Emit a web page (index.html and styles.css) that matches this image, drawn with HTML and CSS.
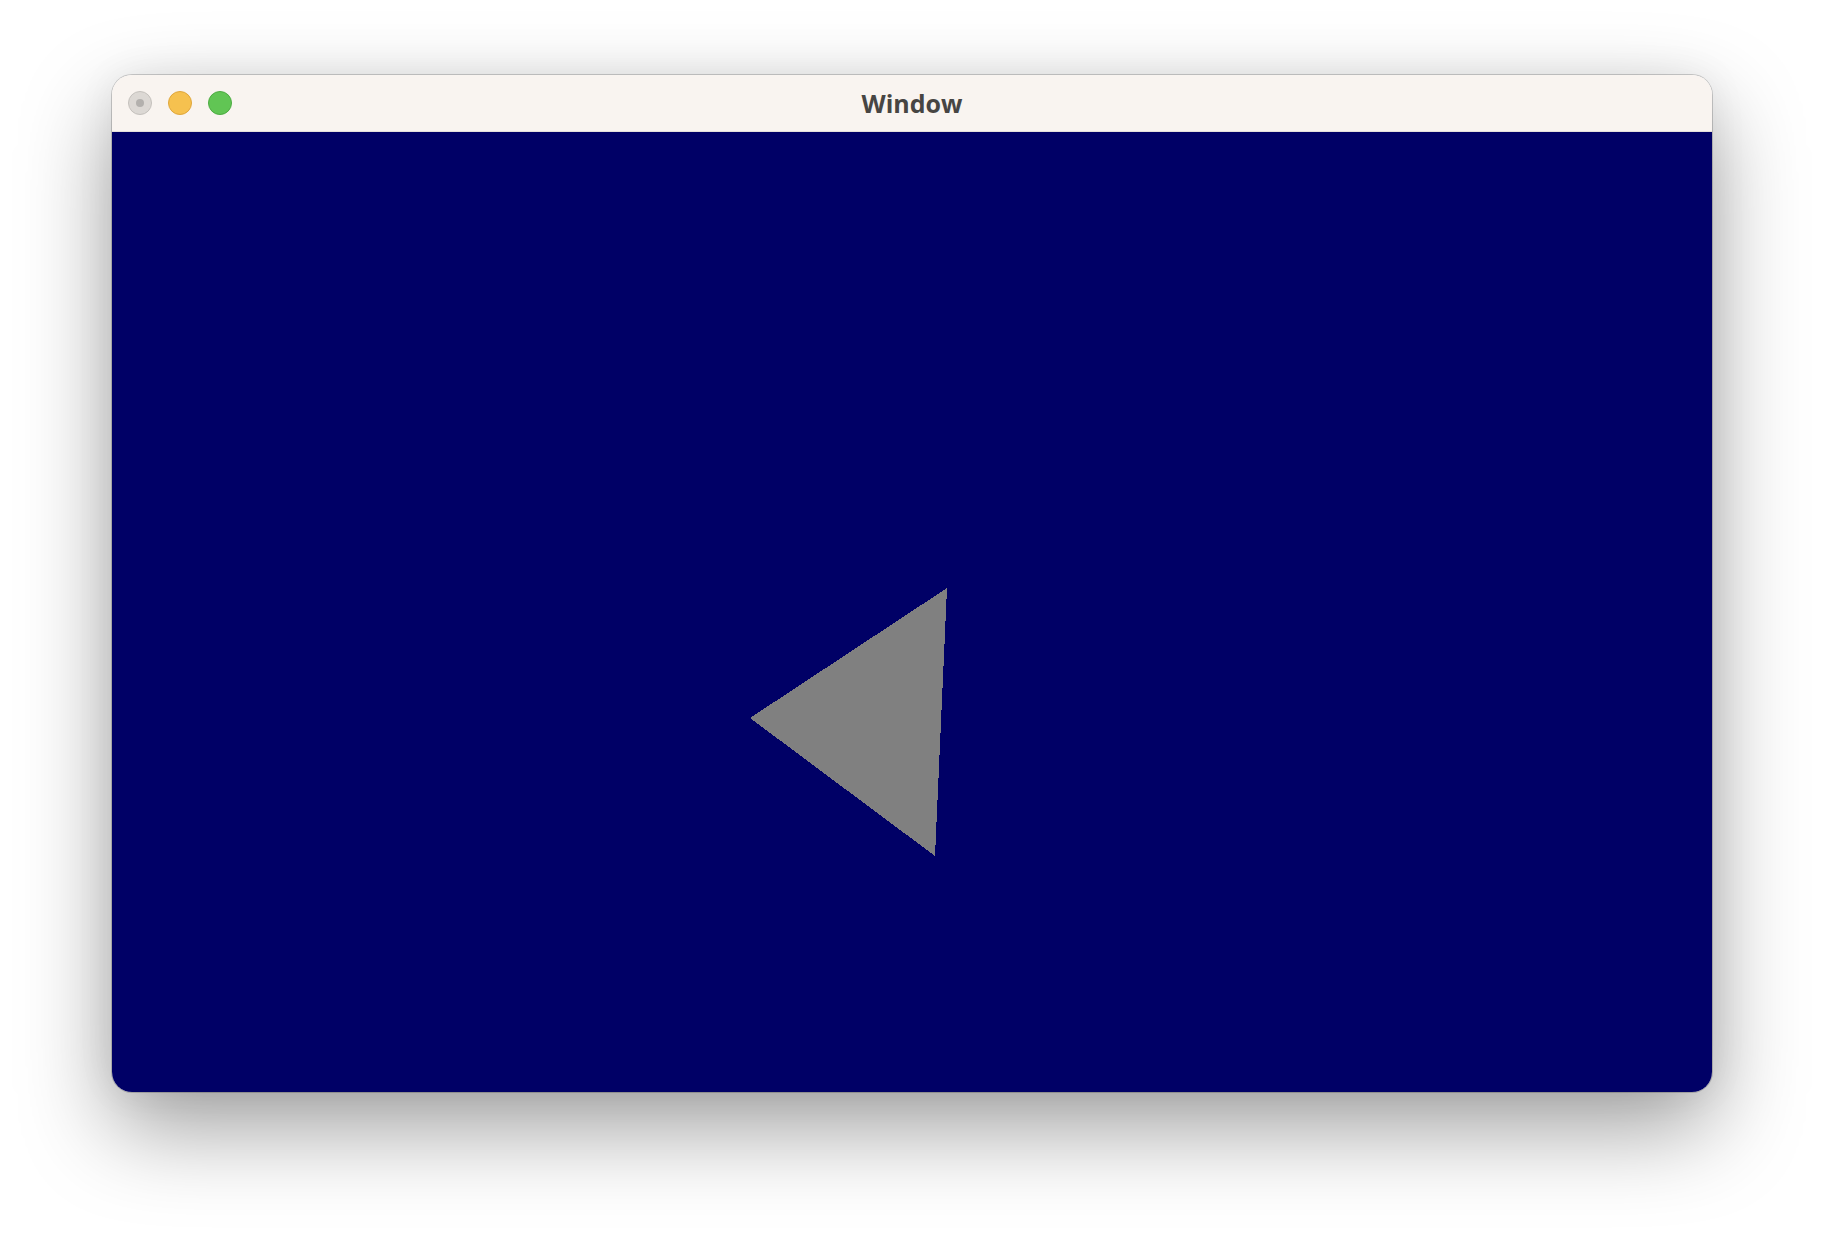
FILE: index.html
```html
<!DOCTYPE html>
<html>
<head>
<meta charset="utf-8">
<link rel="stylesheet" href="styles.css">
</head>
<body>
<div class="stage">
  <div class="window">
    <div class="titlebar">
      <div class="lights">
        <span class="light close"><span class="dot"></span></span>
        <span class="light min"></span>
        <span class="light max"></span>
      </div>
      <div class="title">Window</div>
    </div>
    <div class="content">
      <svg class="scene" width="1600" height="960" viewBox="0 0 1600 960" shape-rendering="crispEdges">
        <polygon points="638,586 835,456 823,724" fill="#808080"/>
      </svg>
    </div>
  </div>
</div>
</body>
</html>
```
FILE: styles.css
```css
html, body {
  margin: 0;
  padding: 0;
  background: #ffffff;
}
.stage {
  width: 1824px;
  height: 1240px;
  display: flex;
  justify-content: center;
  align-items: flex-start;
  padding-top: 75px;
  box-sizing: border-box;
}
.window {
  width: 1600px;
  border-radius: 20px;
  overflow: hidden;
  box-shadow: 0 0 0 1px rgba(0,0,0,0.18), 0 36px 90px rgba(0,0,0,0.38), 0 0 40px rgba(0,0,0,0.06);
  display: flex;
  flex-direction: column;
}
.titlebar {
  height: 56px;
  background: #f9f4f0;
  border-bottom: 1px solid #e4dfdb;
  position: relative;
  display: flex;
  align-items: center;
  justify-content: center;
}
.lights {
  position: absolute;
  left: 16px;
  top: 16px;
  display: flex;
  gap: 16px;
}
.light {
  width: 22px;
  height: 22px;
  border-radius: 50%;
  display: flex;
  align-items: center;
  justify-content: center;
}
.close {
  background: #dcd8d4;
  border: 1px solid #c4c0bc;
}
.close .dot {
  width: 8px;
  height: 8px;
  border-radius: 50%;
  background: #b3b0ad;
}
.min {
  background: #f6c14f;
  border: 1px solid #dfa63c;
}
.max {
  background: #61c554;
  border: 1px solid #4dab42;
}
.title {
  font-family: "Open Sans", "Liberation Sans", sans-serif;
  font-weight: 700;
  font-size: 25px;
  color: #474543;
  margin-top: -1px;
}
.content {
  height: 960px;
  background: #000066;
  position: relative;
}
.scene {
  position: absolute;
  left: 0;
  top: 0;
  display: block;
}
```
